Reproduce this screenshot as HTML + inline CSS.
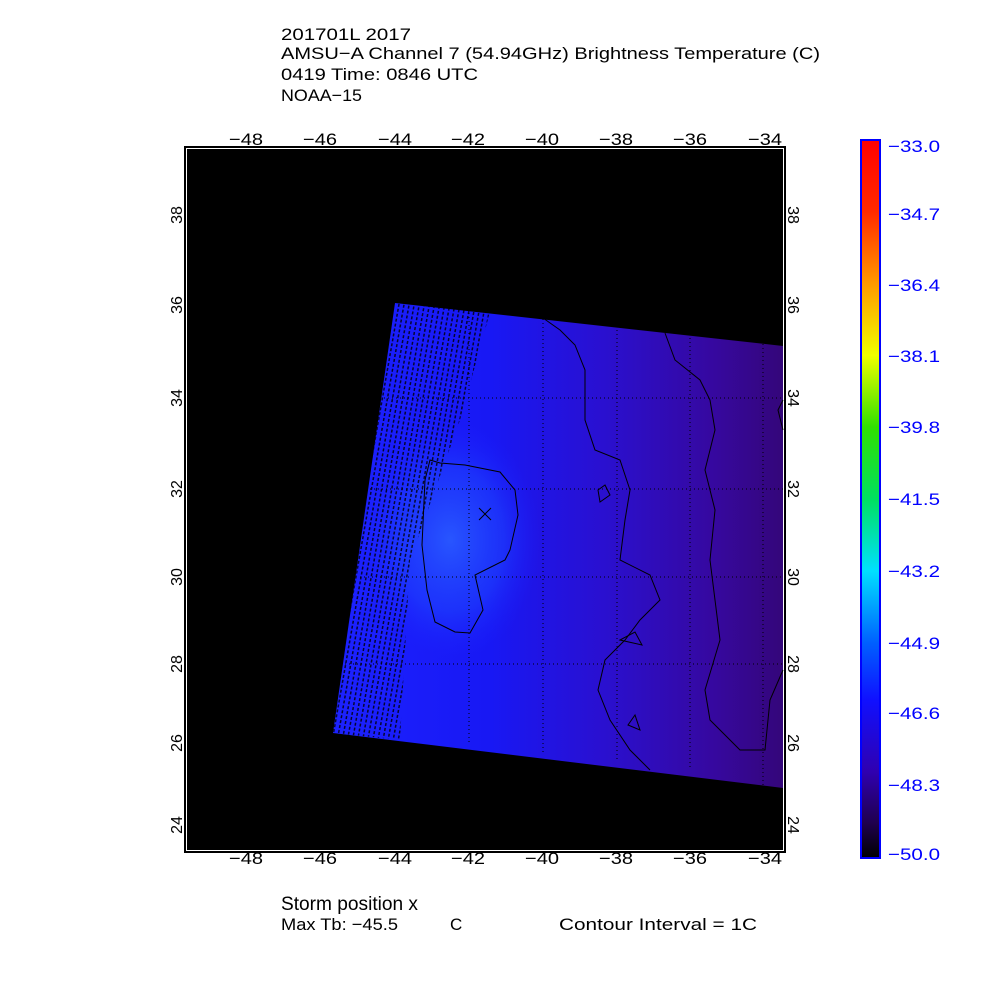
<!DOCTYPE html>
<html><head><style>
body{margin:0;background:#fff;width:1000px;height:1000px;overflow:hidden;font-family:"Liberation Sans",sans-serif}
</style></head><body>
<svg width="1000" height="1000" xmlns="http://www.w3.org/2000/svg" font-family="Liberation Sans, sans-serif">
<defs>
<linearGradient id="sw" x1="0" y1="0" x2="1" y2="0">
<stop offset="0" stop-color="#1c22ff"/>
<stop offset="0.35" stop-color="#1818f4"/>
<stop offset="0.6" stop-color="#2a10d0"/>
<stop offset="0.85" stop-color="#36089e"/>
<stop offset="1" stop-color="#34067a"/>
</linearGradient>
<radialGradient id="st" cx="0.5" cy="0.5" r="0.5">
<stop offset="0" stop-color="#2a5cff" stop-opacity="0.9"/>
<stop offset="0.6" stop-color="#2048ff" stop-opacity="0.5"/>
<stop offset="1" stop-color="#1c22ff" stop-opacity="0"/>
</radialGradient>
<linearGradient id="cb" x1="0" y1="0" x2="0" y2="1">
<stop offset="0" stop-color="#ff0000"/>
<stop offset="0.1" stop-color="#ff2a00"/>
<stop offset="0.2" stop-color="#ff9900"/>
<stop offset="0.3" stop-color="#f0ff00"/>
<stop offset="0.4" stop-color="#30e000"/>
<stop offset="0.5" stop-color="#00e060"/>
<stop offset="0.6" stop-color="#00e0ff"/>
<stop offset="0.7" stop-color="#0060ff"/>
<stop offset="0.78" stop-color="#1010ff"/>
<stop offset="0.88" stop-color="#3000b0"/>
<stop offset="0.95" stop-color="#200050"/>
<stop offset="1" stop-color="#000000"/>
</linearGradient>
<pattern id="hat" width="5" height="5" patternUnits="userSpaceOnUse" patternTransform="rotate(10)">
<rect x="0" y="0" width="1.5" height="3" fill="#000"/>
</pattern>
</defs>
<g font-size="17" fill="#000" lengthAdjust="spacingAndGlyphs">
<text x="281" y="40" textLength="130" lengthAdjust="spacingAndGlyphs">201701L 2017</text>
<text x="281" y="59" textLength="539" lengthAdjust="spacingAndGlyphs">AMSU−A Channel 7 (54.94GHz) Brightness Temperature (C)</text>
<text x="281" y="80" textLength="197" lengthAdjust="spacingAndGlyphs">0419 Time: 0846 UTC</text>
<text x="281" y="101" textLength="81" lengthAdjust="spacingAndGlyphs">NOAA−15</text>
</g>
<rect x="185" y="147" width="600" height="705" fill="#fff" stroke="#000" stroke-width="2"/>
<rect x="187" y="149" width="596" height="701" fill="#000"/>
<polygon points="395,303 783,346 783,788 333,733" fill="url(#sw)"/>
<ellipse cx="450" cy="540" rx="90" ry="120" fill="url(#st)"/>
<polygon points="395,303 490,312 460,420 410,560 400,740 333,733" fill="url(#hat)" opacity="0.8"/>
<g stroke="#000" stroke-dasharray="1,3" stroke-width="1">
<line x1="469" y1="305" x2="469" y2="745"/><line x1="543" y1="315" x2="543" y2="755"/>
<line x1="617" y1="322" x2="617" y2="762"/><line x1="690" y1="330" x2="690" y2="770"/>
<line x1="763" y1="340" x2="763" y2="785"/>
<line x1="380" y1="398" x2="783" y2="398"/><line x1="370" y1="489" x2="783" y2="489"/>
<line x1="360" y1="577" x2="783" y2="577"/><line x1="345" y1="664" x2="783" y2="664"/>
</g>
<g fill="none" stroke="#000" stroke-width="1">
<path d="M430,460 L440,463 L465,465 L500,472 L515,490 L518,515 L510,550 L505,560 L475,575 L483,610 L470,633 L455,632 L435,622 L427,590 L422,545 L425,480 Z"/>
<path d="M543,318 L560,330 L575,345 L585,370 L585,420 L595,450 L620,460 L630,490 L625,520 L620,560 L650,575 L660,600 L640,620 L625,640 L605,660 L598,690 L610,720 L630,750 L650,770"/>
<path d="M665,333 L675,360 L700,380 L710,400 L715,430 L705,470 L715,510 L710,560 L715,600 L720,640 L705,690 L710,720 L740,750 L765,750 L770,700 L783,670"/>
<path d="M598,490 L605,485 L610,495 L600,502 Z"/>
<path d="M620,640 L635,632 L642,645 Z"/>
<path d="M628,725 L635,715 L640,730 Z"/>
<path d="M783,400 L778,410 L783,430"/>
<path d="M479,508 L491,520 M491,508 L479,520"/>
</g>
<g font-size="17" fill="#000" text-anchor="middle">
<text x="246" y="145" textLength="34" lengthAdjust="spacingAndGlyphs">−48</text><text x="320" y="145" textLength="34" lengthAdjust="spacingAndGlyphs">−46</text><text x="395" y="145" textLength="34" lengthAdjust="spacingAndGlyphs">−44</text><text x="468" y="145" textLength="34" lengthAdjust="spacingAndGlyphs">−42</text>
<text x="542" y="145" textLength="34" lengthAdjust="spacingAndGlyphs">−40</text><text x="616" y="145" textLength="34" lengthAdjust="spacingAndGlyphs">−38</text><text x="690" y="145" textLength="34" lengthAdjust="spacingAndGlyphs">−36</text><text x="765" y="145" textLength="34" lengthAdjust="spacingAndGlyphs">−34</text>
<text x="246" y="864" textLength="34" lengthAdjust="spacingAndGlyphs">−48</text><text x="320" y="864" textLength="34" lengthAdjust="spacingAndGlyphs">−46</text><text x="395" y="864" textLength="34" lengthAdjust="spacingAndGlyphs">−44</text><text x="468" y="864" textLength="34" lengthAdjust="spacingAndGlyphs">−42</text>
<text x="542" y="864" textLength="34" lengthAdjust="spacingAndGlyphs">−40</text><text x="616" y="864" textLength="34" lengthAdjust="spacingAndGlyphs">−38</text><text x="690" y="864" textLength="34" lengthAdjust="spacingAndGlyphs">−36</text><text x="765" y="864" textLength="34" lengthAdjust="spacingAndGlyphs">−34</text>
</g>
<g font-size="16" fill="#000" text-anchor="middle">
<text transform="translate(182,215) rotate(-90)">38</text><text transform="translate(182,305) rotate(-90)">36</text>
<text transform="translate(182,398) rotate(-90)">34</text><text transform="translate(182,489) rotate(-90)">32</text>
<text transform="translate(182,577) rotate(-90)">30</text><text transform="translate(182,664) rotate(-90)">28</text>
<text transform="translate(182,743) rotate(-90)">26</text><text transform="translate(182,825) rotate(-90)">24</text>
<text transform="translate(788,215) rotate(90)">38</text><text transform="translate(788,305) rotate(90)">36</text>
<text transform="translate(788,398) rotate(90)">34</text><text transform="translate(788,489) rotate(90)">32</text>
<text transform="translate(788,577) rotate(90)">30</text><text transform="translate(788,664) rotate(90)">28</text>
<text transform="translate(788,743) rotate(90)">26</text><text transform="translate(788,825) rotate(90)">24</text>
</g>
<rect x="861" y="140" width="19" height="718" fill="url(#cb)" stroke="#0000ff" stroke-width="2"/>
<g font-size="17" fill="#0000ff">
<text x="888" y="152" textLength="52" lengthAdjust="spacingAndGlyphs">−33.0</text><text x="888" y="220" textLength="52" lengthAdjust="spacingAndGlyphs">−34.7</text><text x="888" y="291" textLength="52" lengthAdjust="spacingAndGlyphs">−36.4</text>
<text x="888" y="362" textLength="52" lengthAdjust="spacingAndGlyphs">−38.1</text><text x="888" y="433" textLength="52" lengthAdjust="spacingAndGlyphs">−39.8</text><text x="888" y="505" textLength="52" lengthAdjust="spacingAndGlyphs">−41.5</text>
<text x="888" y="577" textLength="52" lengthAdjust="spacingAndGlyphs">−43.2</text><text x="888" y="649" textLength="52" lengthAdjust="spacingAndGlyphs">−44.9</text><text x="888" y="719" textLength="52" lengthAdjust="spacingAndGlyphs">−46.6</text>
<text x="888" y="791" textLength="52" lengthAdjust="spacingAndGlyphs">−48.3</text><text x="888" y="860" textLength="52" lengthAdjust="spacingAndGlyphs">−50.0</text>
</g>
<g font-size="19" fill="#000"><text x="281" y="910" textLength="137" lengthAdjust="spacingAndGlyphs">Storm position x</text></g>
<g font-size="17" fill="#000"><text x="281" y="930" textLength="117" lengthAdjust="spacingAndGlyphs">Max Tb: −45.5</text><text x="450" y="930">C</text><text x="559" y="930" textLength="198" lengthAdjust="spacingAndGlyphs">Contour Interval = 1C</text></g>
</svg>
</body></html>
